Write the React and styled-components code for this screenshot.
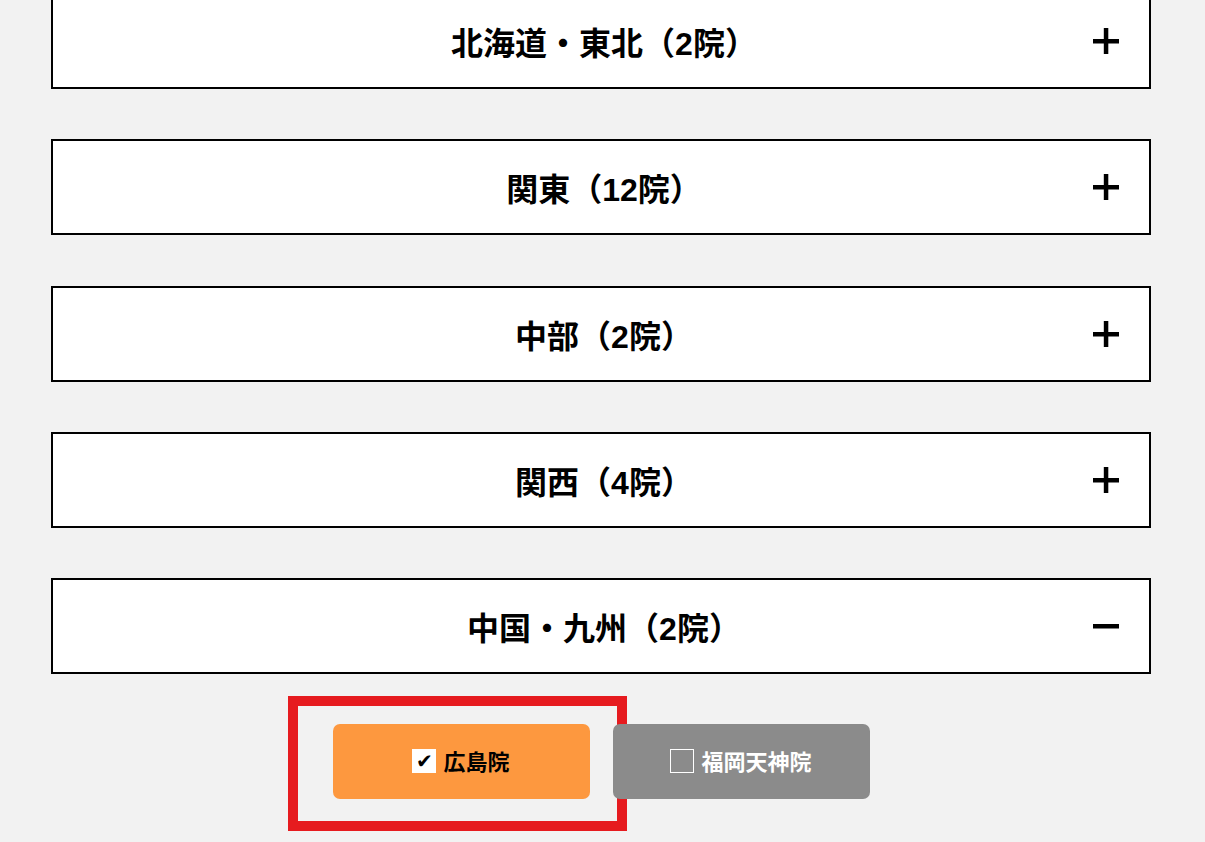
import React from "react";
import styled, { createGlobalStyle } from "styled-components";

const Global = createGlobalStyle`
    html {
        overflow: hidden;
    }
    body {
        margin: 0;
        padding: 0 0 60px;
        background: #f2f2f2;
        font-family: "Liberation Sans", "Noto Sans CJK JP", sans-serif;
    }
`

const Page = styled.div`
    width: 1100px;
    margin: -7px 0 0 51px;
    display: flex;
    flex-direction: column;
    gap: 50.25px;
`

const Area = styled.div`
    display: flex;
    flex-direction: column;
`

const AreaHead = styled.div`
    position: relative;
    height: 92px;
    border: 2px solid #000;
    background: #fff;
    display: flex;
    align-items: center;
    justify-content: center;
`

const AreaTitle = styled.h3`
    margin: 0 0 0 6px;
    font-family: "Liberation Sans", "Noto Sans CJK JP", sans-serif;
    font-size: 32px;
    font-weight: 700;
    color: #000;
`

const Toggle = styled.svg`
    position: absolute;
    right: 30px;
    top: 50%;
    transform: translateY(-50%);
`

const ClinicRow = styled.div`
    display: flex;
    justify-content: center;
    gap: 23px;
    margin-top: 50px;
`

const BtnWrap = styled.div`
    position: relative;
`

const ClinicBtn = styled.button`
    width: 257px;
    height: 75px;
    border: none;
    border-radius: 7px;
    background: ${p => (p.checked ? "#fd983f" : "#8b8b8b")};
    color: ${p => (p.checked ? "#000" : "#fff")};
    font-family: "Liberation Sans", "Noto Sans CJK JP", sans-serif;
    font-size: 22px;
    font-weight: 700;
    display: flex;
    align-items: center;
    justify-content: center;
    gap: 7px;
    padding: 0 0 4px;
`

const Box = styled.span`
    width: 24px;
    height: 24px;
    margin-top: 3px;
    box-sizing: border-box;
    background: ${p => (p.checked ? "#fff" : "transparent")};
    border: ${p => (p.checked ? "none" : "1px solid #fff")};
    display: flex;
    align-items: center;
    justify-content: center;
    font-family: "DejaVu Sans", sans-serif;
    font-size: 20px;
    line-height: 1;
    color: #000;
`

const Highlight = styled.span`
    position: absolute;
    left: -45px;
    top: -28px;
    width: 339px;
    height: 135px;
    border: 10px solid #e61b1f;
    box-sizing: border-box;
    pointer-events: none;
`

const areas = [
    { name: "北海道・東北", count: 2 },
    { name: "関東", count: 12 },
    { name: "中部", count: 2 },
    { name: "関西", count: 4 },
    { name: "中国・九州", count: 2, open: true },
]

const PlusMinus = ({ open }) => (
    <Toggle width="26" height="26" viewBox="0 0 26 26">
        <rect x="0" y="11" width="26" height="4.5" fill="#000" />
        {!open && <rect x="10.8" y="0" width="4.5" height="26" fill="#000" />}
    </Toggle>
)

const App = () => {
    return <>
        <Global />
        <Page>
            {areas.map(a => (
                <Area key={a.name}>
                    <AreaHead>
                        <AreaTitle>{a.name}（{a.count}院）</AreaTitle>
                        <PlusMinus open={a.open} />
                    </AreaHead>
                    {a.open && (
                        <ClinicRow>
                            <BtnWrap>
                                <ClinicBtn checked>
                                    <Box checked>✔</Box>
                                    広島院
                                </ClinicBtn>
                                <Highlight />
                            </BtnWrap>
                            <BtnWrap>
                                <ClinicBtn>
                                    <Box />
                                    福岡天神院
                                </ClinicBtn>
                            </BtnWrap>
                        </ClinicRow>
                    )}
                </Area>
            ))}
        </Page>
    </>
}

export default App
